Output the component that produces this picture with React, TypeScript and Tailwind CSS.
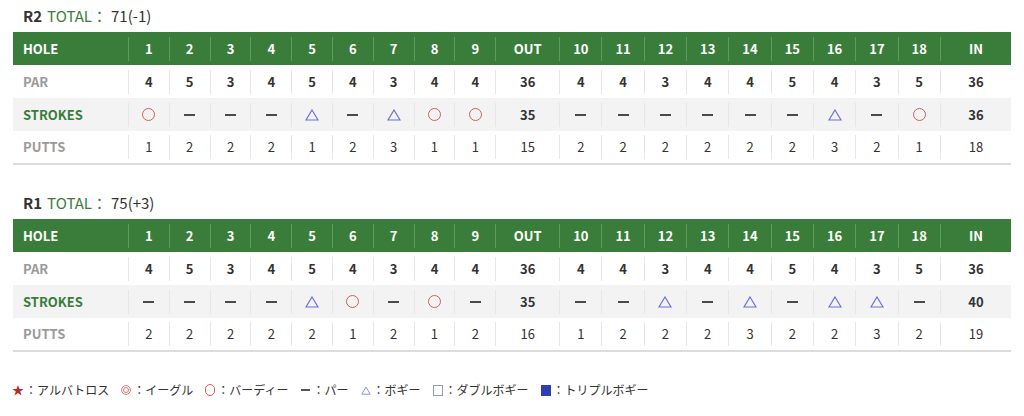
import React from "react";

type S = "O" | "-" | "T";

const PAR = [4, 5, 3, 4, 5, 4, 3, 4, 4, 4, 4, 3, 4, 4, 5, 4, 3, 5];

const rounds: {
  name: string;
  total: string;
  strokes: S[];
  out: number;
  inn: number;
  putts: number[];
  pOut: number;
  pIn: number;
}[] = [
  {
    name: "R2",
    total: "71(-1)",
    strokes: ["O", "-", "-", "-", "T", "-", "T", "O", "O", "-", "-", "-", "-", "-", "-", "T", "-", "O"],
    out: 35,
    inn: 36,
    putts: [1, 2, 2, 2, 1, 2, 3, 1, 1, 2, 2, 2, 2, 2, 2, 3, 2, 1],
    pOut: 15,
    pIn: 18,
  },
  {
    name: "R1",
    total: "75(+3)",
    strokes: ["-", "-", "-", "-", "T", "O", "-", "O", "-", "-", "-", "T", "-", "T", "-", "T", "T", "-"],
    out: 35,
    inn: 40,
    putts: [2, 2, 2, 2, 2, 1, 2, 1, 2, 1, 2, 2, 2, 3, 2, 2, 3, 2],
    pOut: 16,
    pIn: 19,
  },
];

const grid =
  "grid grid-cols-[115px_repeat(9,40.8px)_64px_repeat(9,42.3px)_1fr]";

function Circle() {
  return <span className="block w-[13px] h-[13px] rounded-full border-[1.5px] border-[#d0605a]" />;
}
function Tri() {
  return (
    <svg width="14" height="12" viewBox="0 0 14 12">
      <path d="M7 1 L13 11 L1 11 Z" fill="none" stroke="#6b70d8" strokeWidth="1.2" />
    </svg>
  );
}
function Dash() {
  return <span className="block w-[11px] h-[2px] bg-[#4a4a4a]" />;
}

function Sym({ s }: { s: S }) {
  if (s === "O") return <Circle />;
  if (s === "T") return <Tri />;
  return <Dash />;
}

function Cell({
  children,
  header,
}: {
  children: React.ReactNode;
  header?: boolean;
}) {
  return (
    <div className="flex items-center h-full">
      <div
        className={`flex-1 h-6 flex items-center justify-center border-l ${
          header ? "border-[#5f9a5e]" : "border-[#e6e6e6]"
        }`}
      >
        {children}
      </div>
    </div>
  );
}

function Label({ children, cls }: { children: React.ReactNode; cls: string }) {
  return <div className={`flex items-center pl-[10px] font-bold ${cls}`}>{children}</div>;
}

function Table({ r }: { r: (typeof rounds)[number] }) {
  const holes = Array.from({ length: 18 }, (_, i) => i + 1);
  const seq = <T,>(arr: T[], out: React.ReactNode, inn: React.ReactNode, render: (v: T, i: number) => React.ReactNode) => {
    const a = arr.slice(0, 9).map(render);
    const b = arr.slice(9).map((v, i) => render(v, i + 9));
    return [...a, out, ...b, inn];
  };
  return (
    <div>
      <div className="h-8 flex items-center pl-[10px] text-[15px] text-[#333]">
        <span className="font-bold">{r.name}</span>
        <span className="ml-[5px] text-[#3a7d3a]">TOTAL：</span>
        <span className="ml-[4px]">{r.total}</span>
      </div>
      <div className="border-b-2 border-[#dcdcdc]">
        <div className={`${grid} h-[33px] bg-[#3a7d3a] text-white font-bold text-[13px]`}>
          <Label cls="text-white">HOLE</Label>
          {seq(
            holes,
            <Cell header key="out">OUT</Cell>,
            <Cell header key="in">IN</Cell>,
            (h) => (
              <Cell header key={h}>
                {h}
              </Cell>
            )
          )}
        </div>
        <div className={`${grid} h-[33px] text-[13px] font-bold text-[#333]`}>
          <Label cls="text-[#9a9a9a]">PAR</Label>
          {seq(
            PAR,
            <Cell key="out">36</Cell>,
            <Cell key="in">36</Cell>,
            (p, i) => <Cell key={i}>{p}</Cell>
          )}
        </div>
        <div className={`${grid} h-[33px] bg-[#f3f3f3] text-[13px] font-bold text-[#333]`}>
          <Label cls="text-[#3a7d3a]">STROKES</Label>
          {seq(
            r.strokes,
            <Cell key="out">{r.out}</Cell>,
            <Cell key="in">{r.inn}</Cell>,
            (s, i) => (
              <Cell key={i}>
                <Sym s={s} />
              </Cell>
            )
          )}
        </div>
        <div className={`${grid} h-[32px] text-[13px] text-[#333]`}>
          <Label cls="text-[#9a9a9a]">PUTTS</Label>
          {seq(
            r.putts,
            <Cell key="out">{r.pOut}</Cell>,
            <Cell key="in">{r.pIn}</Cell>,
            (p, i) => <Cell key={i}>{p}</Cell>
          )}
        </div>
      </div>
    </div>
  );
}

function Legend() {
  const items: [React.ReactNode, string][] = [
    [<span className="text-[#b52a2a] text-[12px] leading-none">★</span>, "アルバトロス"],
    [
      <svg width="12" height="12" viewBox="0 0 12 12">
        <circle cx="6" cy="6" r="5.3" fill="none" stroke="#d0605a" strokeWidth="1" />
        <circle cx="6" cy="6" r="3" fill="none" stroke="#d0605a" strokeWidth="1" />
      </svg>,
      "イーグル",
    ],
    [<span className="block w-[12px] h-[12px] rounded-full border border-[#d0605a]" />, "バーディー"],
    [<span className="block w-[9px] h-[1.5px] bg-[#555]" />, "パー"],
    [
      <svg width="13" height="11" viewBox="0 0 13 11">
        <path d="M6.5 1 L12 10.3 L1 10.3 Z" fill="none" stroke="#6b70d8" strokeWidth="1" />
      </svg>,
      "ボギー",
    ],
    [<span className="block w-[11px] h-[11px] border border-[#8f95dd]" />, "ダブルボギー"],
    [<span className="block w-[11px] h-[11px] bg-[#2f3fb0]" />, "トリプルボギー"],
  ];
  return (
    <div className="flex items-center gap-[12px] pl-[13px] text-[12px] text-[#333]">
      {items.map(([sym, t], i) => (
        <div key={i} className="flex items-center">
          <span className="flex items-center justify-center w-[10px]">{sym}</span>
          <span className="ml-[2px]">：{t}</span>
        </div>
      ))}
    </div>
  );
}

export default function App() {
  return (
    <div
      className="w-[1024px] h-[416px] bg-white px-[13px] overflow-hidden"
      style={{ fontFamily: '"Noto Sans CJK JP", "Noto Sans", sans-serif' }}
    >
      <div className="flex flex-col">
        <Table r={rounds[0]} />
        <div className="h-[22px]" />
        <Table r={rounds[1]} />
      </div>
      <div className="mt-[29px] -mx-[13px]">
        <Legend />
      </div>
    </div>
  );
}
